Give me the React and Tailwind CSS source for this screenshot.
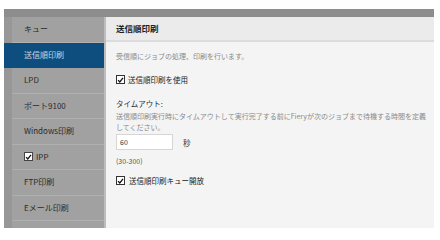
const items = [
  { label: "キュー" },
  { label: "送信順印刷", active: true },
  { label: "LPD" },
  { label: "ポート9100" },
  { label: "Windows印刷" },
  { label: "IPP", check: true },
  { label: "FTP印刷" },
  { label: "Eメール印刷" },
];

function Check({ className = "" }) {
  return (
    <span className={"inline-flex items-center justify-center w-[9px] h-[9px] bg-white border border-[#333] " + className}>
      <svg viewBox="0 0 10 10" className="w-[8px] h-[8px]">
        <path d="M1.5 5.2 L4 7.8 L8.6 1.8" fill="none" stroke="#111" strokeWidth="1.8" />
      </svg>
    </span>
  );
}

export default function App() {
  return (
    <div className="w-[440px] h-[240px] bg-white overflow-hidden" style={{ fontFamily: '"Noto Sans CJK JP", "Noto Sans", sans-serif' }}>
      <div className="ml-[4px] mt-[9px] w-[430px] h-[219px] flex flex-col">
        <div className="h-[8px] bg-[#8d8d8d]" />
        <div className="flex flex-1 min-h-0">
          {/* sidebar */}
          <div className="w-[100px] bg-[#a1a1a1] flex flex-col">
            {items.map((it) => (
              <div key={it.label} className={"h-[25.5px] flex " + (it.active ? "bg-[#0e4e7e]" : "")}>
                <div className={"w-[8px] " + (it.active ? "" : "bg-[#979797]")} />
                <div className={"flex-1 flex items-center pl-[12px] text-[8px] " + (it.active ? "text-[#c9d6e2]" : "text-[#2a2a2a] border-b border-[#b0b0b0]")}>
                  {it.check && <Check className="mr-[3px] border-[#444]" />}
                  {it.label}
                </div>
              </div>
            ))}
            <div className="flex-1 flex">
              <div className="w-[8px] bg-[#979797]" />
            </div>
          </div>
          {/* main */}
          <div className="flex-1 flex flex-col bg-[#f4f4f4] border-l-2 border-[#bdbdbd]">
            <div className="h-[25px] bg-[#ebebeb] border-b-2 border-[#dcdcdc] flex items-center pl-[10px] text-[8.5px] font-bold text-[#1e1e1e]">
              送信順印刷
            </div>
            <div className="pl-[10px] pr-[8px] text-[#444]">
              <p className="mt-[9px] text-[7px] leading-[10px] text-[#8a8a8a]">受信順にジョブの処理、印刷を行います。</p>
              <div className="mt-[13px] flex items-center gap-[3px] text-[7.5px] text-[#222]">
                <Check />
                <span>送信順印刷を使用</span>
              </div>
              <p className="mt-[14px] text-[7.5px] leading-[10px] text-[#333]">タイムアウト:</p>
              <p className="mt-[2px] text-[7px] leading-[11px] text-[#8a8a8a] whitespace-nowrap">
                送信順印刷実行時にタイムアウトして実行完了する前にFieryが次のジョブまで待機する時間を定義
                <br />
                してください。
              </p>
              <div className="mt-[1px] flex items-center">
                <div className="w-[57px] h-[16px] bg-white border border-[#d6d6d6] flex items-center pl-[3px] text-[7px] text-[#333]">60</div>
                <span className="ml-[10px] text-[7.5px] text-[#333]">秒</span>
              </div>
              <p className="mt-[6px] text-[7px] leading-[10px] text-[#555]">(30-300)</p>
              <div className="mt-[9px] flex items-center gap-[4px] text-[7.5px] text-[#222]">
                <Check />
                <span>送信順印刷キュー開放</span>
              </div>
            </div>
          </div>
        </div>
      </div>
    </div>
  );
}
